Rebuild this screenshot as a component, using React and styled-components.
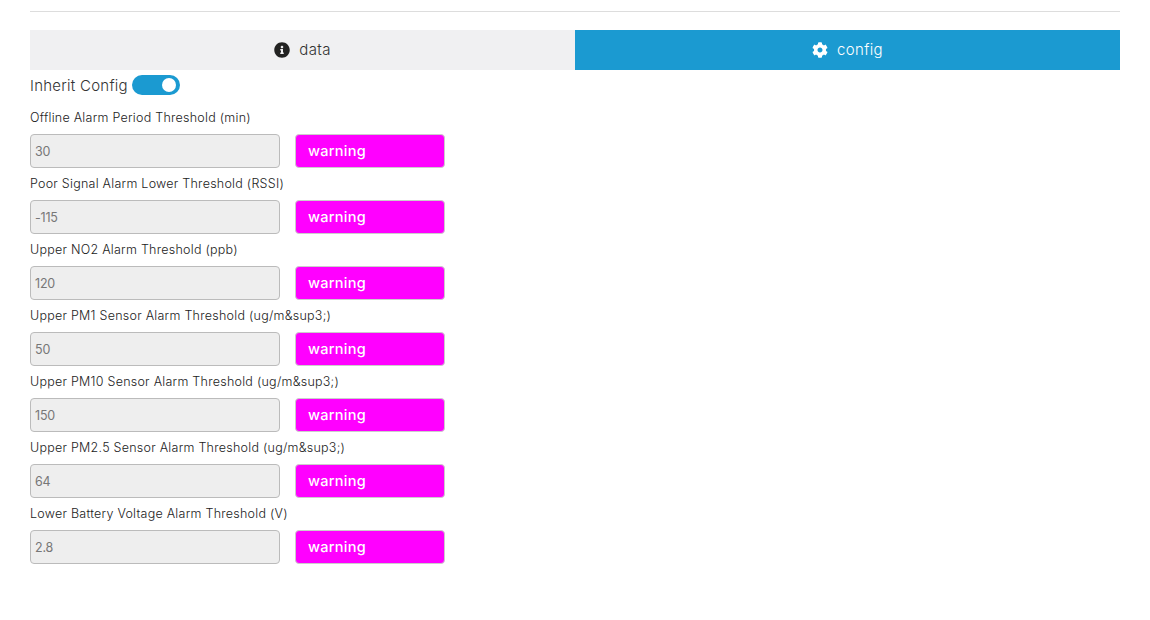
import React from 'react';
import styled, { createGlobalStyle } from 'styled-components';
import { FaInfoCircle, FaCog } from 'react-icons/fa';

const GlobalStyle = createGlobalStyle`
  body {
    margin: 0;
    background: #fff;
    font-family: Inter, "Open Sans", "Liberation Sans", sans-serif;
    color: #333;
  }
`;

const Page = styled.div`
  padding: 11px 30px 56px;
`;

const Divider = styled.hr`
  margin: 0 0 17px;
  border: 0;
  border-top: 1px solid #ddd;
  height: 1px;
`;

const Tabs = styled.div`
  display: grid;
  grid-template-columns: 1fr 1fr;
`;

const Tab = styled.div`
  height: 40px;
  padding-bottom: 1px;
  box-sizing: border-box;
  display: flex;
  align-items: center;
  justify-content: center;
  gap: 9px;
  font-size: 15px;
  font-weight: 300;
  letter-spacing: 0.35px;
  background: ${p => (p.$active ? '#1b9ad1' : '#f0f0f2')};
  color: ${p => (p.$active ? '#fff' : '#333')};
  svg {
    width: 16px;
    height: 16px;
    margin-top: 1px;
    color: ${p => (p.$active ? '#fff' : '#222')};
  }
`;

const InheritRow = styled.div`
  height: 30px;
  margin-bottom: 2px;
  display: flex;
  align-items: center;
  gap: 4px;
  font-size: 15px;
  font-weight: 300;
  letter-spacing: 0.25px;
  color: #333;
`;

const Toggle = styled.span`
  position: relative;
  width: 48px;
  height: 20px;
  border-radius: 10px;
  background: #1b9ad1;
  &::after {
    content: '';
    position: absolute;
    top: 3px;
    right: 4px;
    width: 14px;
    height: 14px;
    border-radius: 50%;
    background: #fff;
  }
`;

const Field = styled.div`
  display: flex;
  flex-direction: column;
`;

const Label = styled.label`
  height: 32px;
  line-height: 32px;
  font-size: 12.5px;
  font-weight: 300;
  letter-spacing: 0.25px;
  color: #222;
  white-space: nowrap;
`;

const Controls = styled.div`
  display: flex;
  gap: 15px;
`;

const ValueInput = styled.input`
  box-sizing: border-box;
  width: 250px;
  height: 34px;
  padding: 0 4px;
  border: 1px solid #bbb;
  border-radius: 4px;
  background: #eee;
  font: inherit;
  font-size: 12.5px;
  letter-spacing: -0.2px;
  color: #777;
  outline: none;
`;

const Severity = styled.div`
  box-sizing: border-box;
  width: 150px;
  height: 34px;
  padding: 0 12px 2px;
  display: flex;
  align-items: center;
  border: 1px solid #ccc;
  border-radius: 4px;
  background: #ff00ff;
  color: #fff;
  font-size: 14.5px;
  font-weight: 500;
  letter-spacing: 0.25px;
`;

const thresholds = [
  ['Offline Alarm Period Threshold (min)', '30'],
  ['Poor Signal Alarm Lower Threshold (RSSI)', '-115'],
  ['Upper NO2 Alarm Threshold (ppb)', '120'],
  ['Upper PM1 Sensor Alarm Threshold (ug/m&sup3;)', '50'],
  ['Upper PM10 Sensor Alarm Threshold (ug/m&sup3;)', '150'],
  ['Upper PM2.5 Sensor Alarm Threshold (ug/m&sup3;)', '64'],
  ['Lower Battery Voltage Alarm Threshold (V)', '2.8'],
];

export default function App() {
  return (
    <Page>
      <GlobalStyle />
      <Divider />
      <Tabs>
        <Tab><FaInfoCircle /> data</Tab>
        <Tab $active><FaCog /> config</Tab>
      </Tabs>
      <InheritRow>
        Inherit Config <Toggle />
      </InheritRow>
      {thresholds.map(([label, value]) => (
        <Field key={label}>
          <Label>{label}</Label>
          <Controls>
            <ValueInput value={value} disabled readOnly />
            <Severity>warning</Severity>
          </Controls>
        </Field>
      ))}
    </Page>
  );
}
